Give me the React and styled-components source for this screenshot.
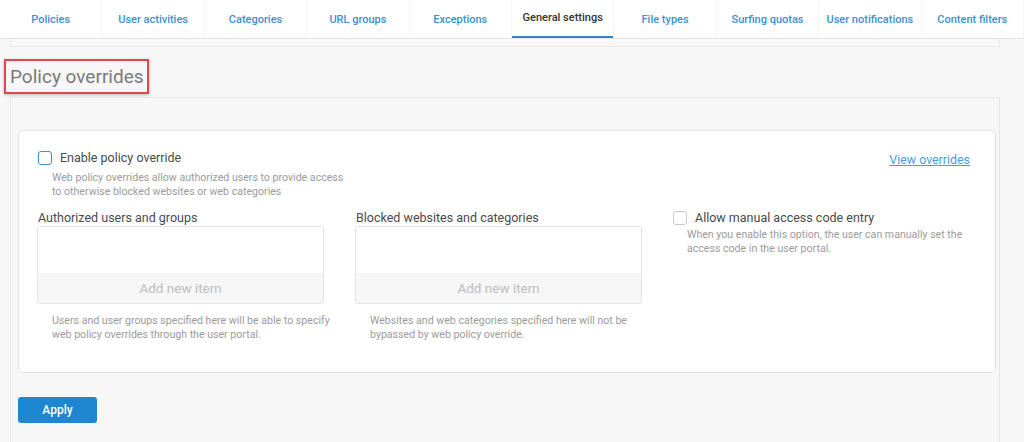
import React from "react";
import styled, { createGlobalStyle } from "styled-components";

const Global = createGlobalStyle`
  html, body { margin: 0; padding: 0; }
  body {
    background: #f7f7f7;
    font-family: Roboto, "Liberation Sans", Arial, sans-serif;
    color: #4a4a4a;
    overflow: hidden;
  }
  * { box-sizing: border-box; }
`;

const Page = styled.div`
  width: 1024px;
  height: 442px;
  display: flex;
  flex-direction: column;
  background: #f7f7f7;
`;

const Nav = styled.nav`
  height: 39px;
  background: #fff;
  border-bottom: 1px solid #e4e4e4;
  display: grid;
  grid-template-columns: repeat(10, 1fr);
`;

const Tab = styled.div`
  display: flex;
  align-items: center;
  justify-content: center;
  font-size: 11px;
  font-weight: 500;
  color: ${(p) => (p.$active ? "#333" : "#3e8fd2")};
  border-right: 1px solid #f6f6f6;
  box-shadow: ${(p) => (p.$active ? "inset 0 -2px 0 #2f86cc" : "none")};
  padding-bottom: ${(p) => (p.$active ? "3px" : "0")};
  padding-top: ${(p) => (p.$active ? "0" : "1px")};
  white-space: nowrap;
`;

const Main = styled.main`
  flex: 1;
  display: flex;
  flex-direction: column;
  padding: 0 24px 0 10px;
  min-height: 0;
`;

const PrevCard = styled.div`
  height: 8px;
  border: 1px solid #e9e9e9;
  border-top: none;
  background: #f8f8f8;
`;

const Heading = styled.h2`
  align-self: flex-start;
  margin: 12px 0 3px -6px;
  padding: 2px 3px 2px 4px;
  border: 2px solid #e0484d;
  box-shadow: 0 1px 3px rgba(0, 0, 0, 0.25);
  font-size: 19px;
  line-height: 27px;
  font-weight: 400;
  color: #7a7a7a;
`;

const Section = styled.section`
  flex: 1;
  border: 1px solid #e6e6e6;
  border-bottom: none;
  background: #f7f7f7;
  padding: 32px 3px 0 7px;
  display: flex;
  flex-direction: column;
  align-items: flex-start;
`;

const Card = styled.div`
  align-self: stretch;
  background: #fff;
  border: 1px solid #e0e0e0;
  border-radius: 5px;
  padding: 20px 25px 30px 19px;
  display: flex;
  flex-direction: column;
  gap: 12px;
`;

const TopRow = styled.div`
  display: flex;
  justify-content: space-between;
  align-items: flex-start;
`;

const Option = styled.div`
  display: flex;
  flex-direction: column;
`;

const CheckLine = styled.label`
  display: flex;
  align-items: center;
  gap: 8px;
  font-size: 12.5px;
  line-height: 14px;
  color: #4a4a4a;
  white-space: nowrap;
`;

const Box = styled.span`
  width: 14px;
  height: 14px;
  border: 1.5px solid ${(p) => (p.$blue ? "#3a8fd2" : "#c9c9c9")};
  border-radius: 3px;
  background: #fff;
  flex: none;
`;

const Desc = styled.p`
  margin: ${(p) => p.$mt || "6px"} 0 0 ${(p) => p.$ml || "14px"};
  font-size: 10.6px;
  line-height: 14px;
  color: #9b9b9b;
  white-space: nowrap;
`;

const Link = styled.a`
  margin-top: 2px;
  font-size: 12.4px;
  line-height: 14px;
  color: #4a9be0;
  text-decoration: underline;
  cursor: pointer;
`;

const Grid = styled.div`
  display: grid;
  grid-template-columns: 287px 287px 1fr;
  column-gap: 31px;
  margin-left: -1px;
`;

const Field = styled.div`
  display: flex;
  flex-direction: column;
`;

const FieldLabel = styled.div`
  font-size: 12.5px;
  line-height: 14px;
  margin: 0 0 1px 1px;
  color: #4a4a4a;
  white-space: nowrap;
`;

const ListBox = styled.div`
  height: 78px;
  border: 1px solid #e3e3e3;
  border-radius: 3px;
  display: flex;
  flex-direction: column;
  overflow: hidden;
`;

const ListArea = styled.div`
  flex: 1;
  background: #fff;
`;

const AddItem = styled.div`
  height: 30px;
  background: #f6f6f6;
  display: flex;
  align-items: center;
  justify-content: center;
  font-size: 13.5px;
  color: #bdbdbd;
`;

const Apply = styled.button`
  margin-top: 24px;
  width: 79px;
  height: 26px;
  border: none;
  border-radius: 3px;
  background: #1f86d1;
  color: #fff;
  font-family: inherit;
  font-size: 12px;
  font-weight: 500;
  cursor: pointer;
`;

const tabs = [
  "Policies",
  "User activities",
  "Categories",
  "URL groups",
  "Exceptions",
  "General settings",
  "File types",
  "Surfing quotas",
  "User notifications",
  "Content filters",
];

export default function App() {
  return (
    <>
      <Global />
      <Page>
        <Nav>
          {tabs.map((t) => (
            <Tab key={t} $active={t === "General settings"}>
              {t}
            </Tab>
          ))}
        </Nav>
        <Main>
          <PrevCard />
          <Heading>Policy overrides</Heading>
          <Section>
            <Card>
              <TopRow>
                <Option>
                  <CheckLine>
                    <Box $blue />
                    Enable policy override
                  </CheckLine>
                  <Desc>
                    Web policy overrides allow authorized users to provide access
                    <br />
                    to otherwise blocked websites or web categories
                  </Desc>
                </Option>
                <Link>View overrides</Link>
              </TopRow>
              <Grid>
                <Field>
                  <FieldLabel>Authorized users and groups</FieldLabel>
                  <ListBox>
                    <ListArea />
                    <AddItem>Add new item</AddItem>
                  </ListBox>
                  <Desc $mt="10px" $ml="15px">
                    Users and user groups specified here will be able to specify
                    <br />
                    web policy overrides through the user portal.
                  </Desc>
                </Field>
                <Field>
                  <FieldLabel>Blocked websites and categories</FieldLabel>
                  <ListBox>
                    <ListArea />
                    <AddItem>Add new item</AddItem>
                  </ListBox>
                  <Desc $mt="10px" $ml="15px">
                    Websites and web categories specified here will not be
                    <br />
                    bypassed by web policy override.
                  </Desc>
                </Field>
                <Option>
                  <CheckLine>
                    <Box />
                    Allow manual access code entry
                  </CheckLine>
                  <Desc $mt="3px">
                    When you enable this option, the user can manually set the
                    <br />
                    access code in the user portal.
                  </Desc>
                </Option>
              </Grid>
            </Card>
            <Apply>Apply</Apply>
          </Section>
        </Main>
      </Page>
    </>
  );
}
